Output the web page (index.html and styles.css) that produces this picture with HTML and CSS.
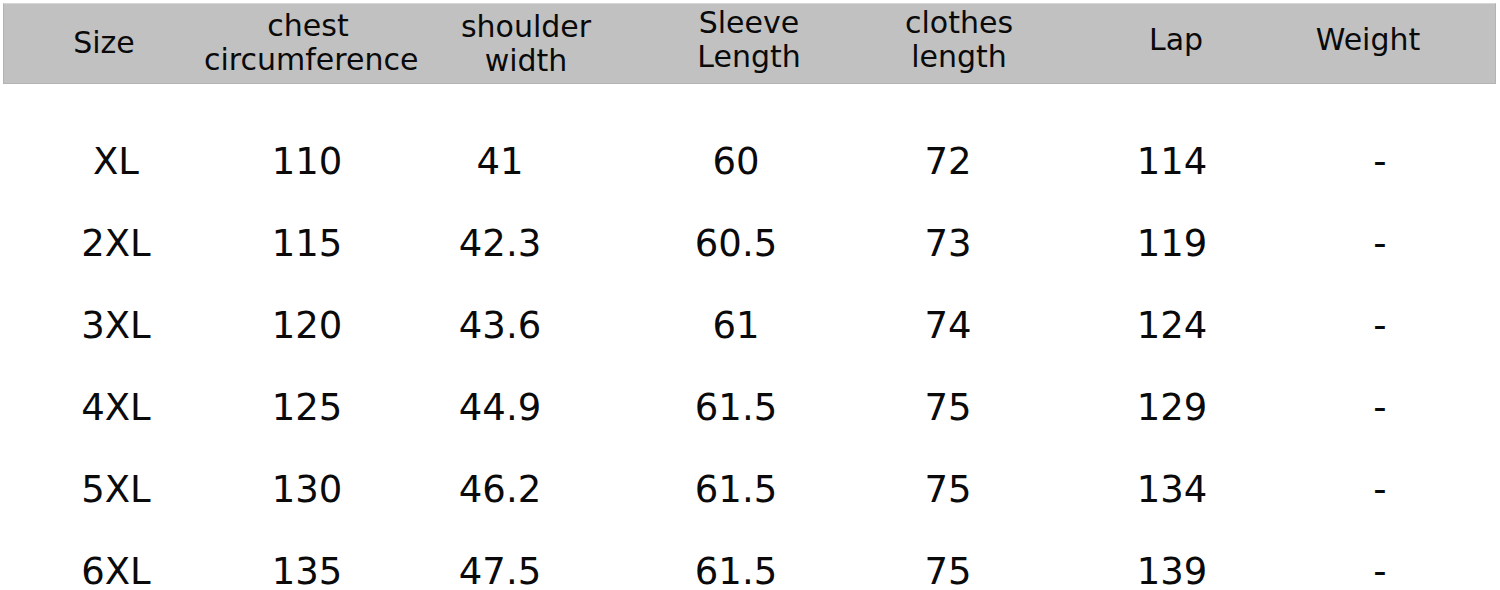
FILE: index.html
```html
<!DOCTYPE html>
<html>
<head>
<meta charset="utf-8">
<link rel="stylesheet" href="styles.css">
</head>
<body>
<div class="chart">
  <div class="head">
    <div class="hc c1">Size</div>
    <div class="hc c2">chest<br>circumference</div>
    <div class="hc c3">shoulder<br>width</div>
    <div class="hc c4">Sleeve<br>Length</div>
    <div class="hc c5">clothes<br>length</div>
    <div class="hc c6">Lap</div>
    <div class="hc c7">Weight</div>
  </div>
  <div class="rows">
    <div class="row"><span>XL</span><span>110</span><span>41</span><span>60</span><span>72</span><span>114</span><span>-</span></div>
    <div class="row"><span>2XL</span><span>115</span><span>42.3</span><span>60.5</span><span>73</span><span>119</span><span>-</span></div>
    <div class="row"><span>3XL</span><span>120</span><span>43.6</span><span>61</span><span>74</span><span>124</span><span>-</span></div>
    <div class="row"><span>4XL</span><span>125</span><span>44.9</span><span>61.5</span><span>75</span><span>129</span><span>-</span></div>
    <div class="row"><span>5XL</span><span>130</span><span>46.2</span><span>61.5</span><span>75</span><span>134</span><span>-</span></div>
    <div class="row"><span>6XL</span><span>135</span><span>47.5</span><span>61.5</span><span>75</span><span>139</span><span>-</span></div>
  </div>
</div>
</body>
</html>
```
FILE: styles.css
```css
html, body {
  margin: 0;
  padding: 0;
  background: #ffffff;
}
body {
  width: 1500px;
  height: 590px;
  overflow: hidden;
  font-family: "DejaVu Sans", sans-serif;
  color: #0a0a0a;
}
.chart {
  padding-top: 3px;
}
.head {
  margin-left: 3px;
  width: 1491px;
  height: 79px;
  background: #c1c1c1;
  border: 1px solid #b3b3b3;
  border-top-color: #d6d6d6;
  display: grid;
  grid-template-columns: 200px 208px 228px 218px 202px 232px 152px 1fr;
  align-items: center;
  font-size: 30px;
  line-height: 34px;
  text-align: center;
}
.hc {
  white-space: nowrap;
}
.c1 {
  margin-bottom: 2px;
}
.c2 {
  margin-bottom: 2px;
}
.c4 {
  margin-bottom: 8px;
}
.c5 {
  margin-bottom: 8px;
}
.c6,
.c7 {
  margin-bottom: 8px;
}
.rows {
  padding-top: 36px;
}
.row {
  display: grid;
  grid-template-columns: 232px 150px 236px 236px 188px 260px 156px 1fr;
  height: 82px;
  align-items: center;
  text-align: center;
  font-size: 37px;
}
```
